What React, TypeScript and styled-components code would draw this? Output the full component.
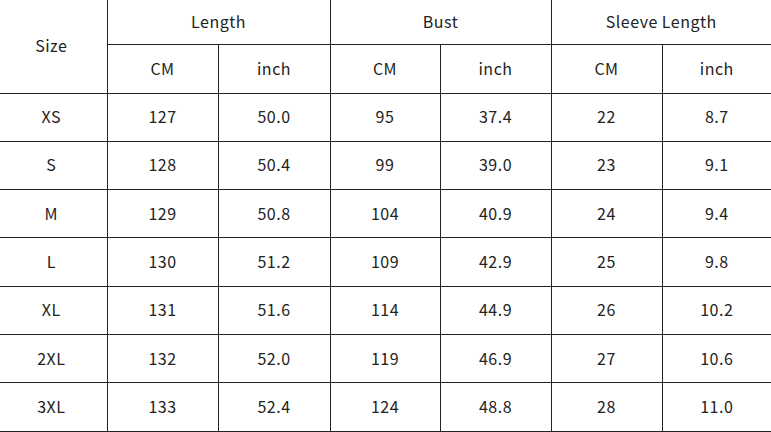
import React from 'react'
import styled, { createGlobalStyle } from 'styled-components'

interface SizeRow {
    size: string,
    lengthCm: number,
    lengthIn: string,
    bustCm: number,
    bustIn: string,
    sleeveCm: number,
    sleeveIn: string
}

const rows: SizeRow[] = [
    { size: 'XS', lengthCm: 127, lengthIn: '50.0', bustCm: 95, bustIn: '37.4', sleeveCm: 22, sleeveIn: '8.7' },
    { size: 'S', lengthCm: 128, lengthIn: '50.4', bustCm: 99, bustIn: '39.0', sleeveCm: 23, sleeveIn: '9.1' },
    { size: 'M', lengthCm: 129, lengthIn: '50.8', bustCm: 104, bustIn: '40.9', sleeveCm: 24, sleeveIn: '9.4' },
    { size: 'L', lengthCm: 130, lengthIn: '51.2', bustCm: 109, bustIn: '42.9', sleeveCm: 25, sleeveIn: '9.8' },
    { size: 'XL', lengthCm: 131, lengthIn: '51.6', bustCm: 114, bustIn: '44.9', sleeveCm: 26, sleeveIn: '10.2' },
    { size: '2XL', lengthCm: 132, lengthIn: '52.0', bustCm: 119, bustIn: '46.9', sleeveCm: 27, sleeveIn: '10.6' },
    { size: '3XL', lengthCm: 133, lengthIn: '52.4', bustCm: 124, bustIn: '48.8', sleeveCm: 28, sleeveIn: '11.0' },
]

const colWidths = [107, 111, 112, 110, 111, 111, 109]

const App: React.FC = () => {
    return (
        <>
            <GlobalStyle />
            <Chart>
                <colgroup>
                    {colWidths.map((w, i) => <col key={i} style={{ width: w }} />)}
                </colgroup>
                <thead>
                    <HeadRow $height={44}>
                        <Cell as="th" rowSpan={2} $first>Size</Cell>
                        <Cell as="th" colSpan={2}>Length</Cell>
                        <Cell as="th" colSpan={2}>Bust</Cell>
                        <Cell as="th" colSpan={2} $last>Sleeve Length</Cell>
                    </HeadRow>
                    <HeadRow $height={49}>
                        <Cell as="th">CM</Cell>
                        <Cell as="th">inch</Cell>
                        <Cell as="th">CM</Cell>
                        <Cell as="th">inch</Cell>
                        <Cell as="th">CM</Cell>
                        <Cell as="th" $last>inch</Cell>
                    </HeadRow>
                </thead>
                <tbody>
                    {rows.map((r) => (
                        <BodyRow key={r.size}>
                            <Cell $first>{r.size}</Cell>
                            <Cell>{r.lengthCm}</Cell>
                            <Cell>{r.lengthIn}</Cell>
                            <Cell>{r.bustCm}</Cell>
                            <Cell>{r.bustIn}</Cell>
                            <Cell>{r.sleeveCm}</Cell>
                            <Cell $last>{r.sleeveIn}</Cell>
                        </BodyRow>
                    ))}
                </tbody>
            </Chart>
        </>
    )
}

export default App

const GlobalStyle = createGlobalStyle`
    html, body {
        margin: 0;
        padding: 0;
        background: #ffffff;
    }
    body {
        font-family: "Noto Sans CJK SC", "Noto Sans", sans-serif;
        color: #222222;
    }
`

const Chart = styled.table`
    width: 771px;
    table-layout: fixed;
    border-collapse: collapse;
    border-spacing: 0;
    font-size: 16px;
    letter-spacing: 0.5px;
`

const HeadRow = styled.tr<{ $height: number }>`
    height: ${(p) => p.$height}px;
`

const BodyRow = styled.tr`
    height: 48.3px;
`

// first column sits a little left of its cell centre in the reference
const Cell = styled.td<{ $last?: boolean, $first?: boolean }>`
    padding: 0 ${(p) => (p.$first ? '4px' : '0')} 2px 0;
    text-align: center;
    vertical-align: middle;
    font-weight: 400;
    color: #222222;
    border-bottom: 1px solid #222222;
    border-right: ${(p) => (p.$last ? 'none' : '1px solid #222222')};
    white-space: nowrap;
`
